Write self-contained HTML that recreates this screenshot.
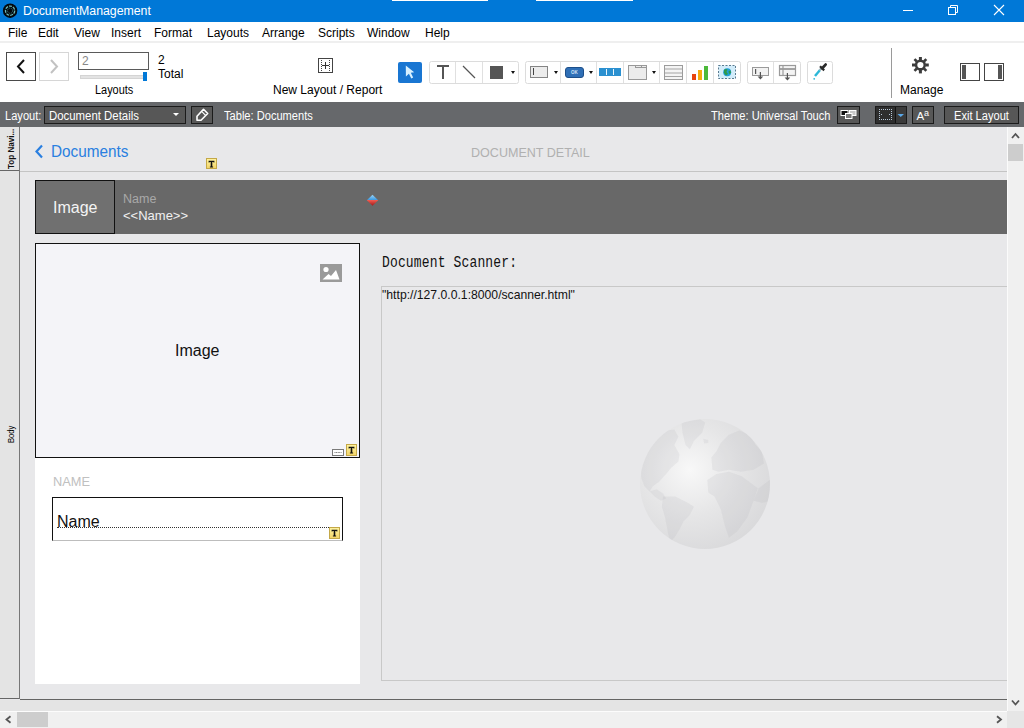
<!DOCTYPE html>
<html><head><meta charset="utf-8">
<style>
*{margin:0;padding:0;box-sizing:border-box}
html,body{width:1024px;height:728px;overflow:hidden;background:#e8e8ea;font-family:"Liberation Sans",sans-serif}
.a{position:absolute}
.t{position:absolute;white-space:nowrap;line-height:1}
#title{left:0;top:0;width:1024px;height:22px;background:#0078d7}
#menu{left:0;top:22px;width:1024px;height:19px;background:#fff}
#tb{left:0;top:41px;width:1024px;height:61px;background:#fff;border-top:2px solid #efefef}
#lb{left:0;top:102px;width:1024px;height:25px;background:#66686b}
.menu{font-size:12px;color:#000;top:27px}
.lb{font-size:12px;color:#fff;top:110px;transform-origin:0 0;transform:scaleX(0.925)}
.lbtn{background:#575757;border:1px solid #1b1b1b}
.grp{border:1px solid #dcdcdc;border-radius:2.5px;background:#fff}
.div{width:1px;background:#e0e0e0}
.dd{width:0;height:0;border-left:2.6px solid transparent;border-right:2.6px solid transparent;border-top:3px solid #111}
</style></head><body>
<svg width="0" height="0" style="position:absolute"><defs><linearGradient id="bgy" x1="0" y1="0" x2="0" y2="1"><stop offset="0" stop-color="#fff4a0"/><stop offset="1" stop-color="#f2d468"/></linearGradient></defs></svg>
<!-- title bar -->
<div id="title" class="a"></div>
<div class="a" style="left:392px;top:0;width:96px;height:1px;background:#fff"></div>
<div class="a" style="left:536px;top:0;width:97px;height:1px;background:#fff"></div>
<svg class="a" style="left:0;top:0" width="22" height="22"><circle cx="10.1" cy="10.7" r="7.2" fill="#03080c"/><circle cx="10.1" cy="10.7" r="4.6" fill="none" stroke="#6cb8b8" stroke-width="1.3" stroke-dasharray="3 1"/><circle cx="10.1" cy="10.7" r="2.6" fill="none" stroke="#3c7c80" stroke-width="0.9" stroke-dasharray="1.2 0.9"/></svg>
<div class="t" style="left:23px;top:5px;font-size:12.3px;color:#fff">DocumentManagement</div>
<svg class="a" style="left:890px;top:0" width="134" height="22"><path d="M13 10.5 H23" stroke="#fff" stroke-width="1"/><rect x="58.5" y="7.5" width="7" height="7" fill="none" stroke="#fff" stroke-width="1"/><path d="M60.5 7.5 V5.5 H67.5 V12.5 H65.5" fill="none" stroke="#fff" stroke-width="1"/><path d="M104 5 L114 15 M114 5 L104 15" stroke="#fff" stroke-width="1.1"/></svg>

<!-- menu -->
<div id="menu" class="a"></div>
<div class="t menu" style="left:8px">File</div>
<div class="t menu" style="left:38px">Edit</div>
<div class="t menu" style="left:74px">View</div>
<div class="t menu" style="left:111px">Insert</div>
<div class="t menu" style="left:154px">Format</div>
<div class="t menu" style="left:207px">Layouts</div>
<div class="t menu" style="left:262px">Arrange</div>
<div class="t menu" style="left:318px">Scripts</div>
<div class="t menu" style="left:367px">Window</div>
<div class="t menu" style="left:425px">Help</div>

<!-- toolbar -->
<div id="tb" class="a"></div>
<div class="a" style="left:6px;top:52px;width:30px;height:29px;border:1px solid #4a4a4a"></div>
<svg class="a" style="left:6px;top:52px" width="30" height="29"><path d="M18 8 L12 14.5 L18 21" fill="none" stroke="#111" stroke-width="2"/></svg>
<div class="a" style="left:39px;top:52px;width:30px;height:29px;border:1px solid #d6d6d6"></div>
<svg class="a" style="left:39px;top:52px" width="30" height="29"><path d="M12 8 L18 14.5 L12 21" fill="none" stroke="#c2c2c2" stroke-width="2"/></svg>
<div class="a" style="left:78px;top:52px;width:71px;height:18px;border:1px solid #5a5a5a"></div>
<div class="t" style="left:82px;top:55px;font-size:12px;color:#888">2</div>
<div class="a" style="left:80px;top:75px;width:66px;height:4px;background:#e3e3e3;border:1px solid #d4d4d4"></div>
<div class="a" style="left:143px;top:72px;width:4px;height:9px;background:#0078d7"></div>
<div class="t" style="left:158px;top:53.5px;font-size:12px;color:#000">2</div>
<div class="t" style="left:158px;top:68px;font-size:12px;color:#000">Total</div>
<div class="t" style="left:94.5px;top:84px;font-size:12px;color:#000;transform-origin:0 0;transform:scaleX(0.91)">Layouts</div>
<!-- new layout -->
<svg class="a" style="left:318px;top:58px" width="15" height="15"><rect x="0.5" y="0.5" width="14" height="14" fill="none" stroke="#444" stroke-width="1"/><path d="M3.5 2 V13 M11.5 2 V13" stroke="#444" stroke-width="1" stroke-dasharray="1 1"/><path d="M7.5 4 V11 M4 7.5 H11" stroke="#333" stroke-width="1"/></svg>
<div class="t" style="left:273px;top:84px;font-size:12px;color:#000">New Layout / Report</div>
<!-- select tool -->
<div class="a" style="left:398px;top:62px;width:24px;height:21px;background:#1976d2;border-radius:2px"></div>
<svg class="a" style="left:398px;top:62px" width="24" height="21"><path d="M7.8 3.6 L16.2 10.2 L12.8 10.7 L15.2 15.6 L13.3 16.6 L10.9 11.7 L7.9 14.4 Z" fill="#d8f0ff"/></svg>
<!-- group 1 -->
<div class="a grp" style="left:429px;top:61px;width:90px;height:23px"></div>
<div class="a div" style="left:455px;top:62px;height:21px"></div>
<div class="a div" style="left:482px;top:62px;height:21px"></div>
<div class="a" style="left:437px;top:65px;width:12px;height:2px;background:#555"></div>
<div class="a" style="left:442px;top:65px;width:2px;height:14px;background:#555"></div>
<svg class="a" style="left:460px;top:63px" width="18" height="18"><path d="M3 3 L15 15" stroke="#555" stroke-width="1.3"/></svg>
<div class="a" style="left:490px;top:66px;width:13px;height:13px;background:#555"></div>
<div class="a dd" style="left:511px;top:71px"></div>
<!-- group 2 -->
<div class="a grp" style="left:525px;top:61px;width:216px;height:23px"></div>
<div class="a div" style="left:560px;top:62px;height:21px"></div>
<div class="a div" style="left:596px;top:62px;height:21px"></div>
<div class="a div" style="left:623px;top:62px;height:21px"></div>
<div class="a div" style="left:659px;top:62px;height:21px"></div>
<div class="a div" style="left:686px;top:62px;height:21px"></div>
<div class="a div" style="left:713px;top:62px;height:21px"></div>
<div class="a" style="left:530px;top:66px;width:18px;height:12px;background:#ececec;border:1px solid #858585"></div>
<div class="a" style="left:533px;top:68px;width:1px;height:7px;background:#444"></div>
<div class="a dd" style="left:553.5px;top:71px"></div>
<div class="a" style="left:565px;top:67px;width:19px;height:11px;background:#2f6fb6;border-radius:3px;border:1px solid #1d4f8a"></div>
<div class="t" style="left:571px;top:71px;font-size:4.5px;color:#cfe3f7;font-weight:bold">OK</div>
<div class="a dd" style="left:589px;top:71px"></div>
<div class="a" style="left:599px;top:68px;width:22px;height:8px;background:#2b90d0"></div>
<div class="a" style="left:606px;top:69px;width:1px;height:6px;background:#e8f4fc"></div>
<div class="a" style="left:613px;top:69px;width:1px;height:6px;background:#e8f4fc"></div>
<div class="a" style="left:628px;top:65px;width:19px;height:15px;background:#ececec;border:1px solid #999"></div>
<div class="a" style="left:635px;top:65px;width:12px;height:3px;border:1px solid #999;border-right:0"></div>
<div class="a" style="left:641px;top:65px;width:1px;height:3px;background:#999"></div>
<div class="a dd" style="left:652px;top:71px"></div>
<svg class="a" style="left:664px;top:65px" width="19" height="15"><rect x="0.5" y="0.5" width="18" height="14" fill="#f4f4f4" stroke="#9c9c9c" stroke-width="1"/><path d="M1 4 H18 M1 8 H18 M1 11.5 H18" stroke="#a4a4a4" stroke-width="1"/></svg>
<div class="a" style="left:692px;top:74px;width:4px;height:6px;background:#e8450f"></div>
<div class="a" style="left:698px;top:70px;width:4px;height:10px;background:#f5ac0c"></div>
<div class="a" style="left:704px;top:66px;width:4px;height:14px;background:#4cb93a"></div>
<svg class="a" style="left:718px;top:65px" width="18" height="14"><rect x="0.5" y="0.5" width="17" height="13" fill="#d2ecfa" stroke="#5a7a90" stroke-width="1" stroke-dasharray="2 1.5"/><circle cx="9.2" cy="7.2" r="4" fill="#1f9fd8"/><path d="M6 5 Q8 3.5 9.5 4.5 L8.5 7 L10 9 L8 10.5 L6 8Z M10.5 6 L12.5 5.5 L13 8 L11 9Z" fill="#2e9a4a"/></svg>
<!-- group 3 -->
<div class="a grp" style="left:747px;top:61px;width:54px;height:23px"></div>
<div class="a div" style="left:773px;top:62px;height:21px"></div>
<svg class="a" style="left:747px;top:61px" width="54" height="23"><rect x="5.5" y="6.5" width="16" height="8" fill="#f2f2f2" stroke="#9a9a9a" stroke-width="1"/><rect x="8" y="8" width="1.2" height="5" fill="#555"/><path d="M13.4 11 V17" stroke="#555" stroke-width="1.2"/><path d="M10.6 15.5 L16.2 15.5 L13.4 18.6Z" fill="#555"/><rect x="32.5" y="4.5" width="16" height="10" fill="#f4f4f4" stroke="#9a9a9a" stroke-width="1.2"/><path d="M33 8 H48" stroke="#9a9a9a" stroke-width="1.8"/><path d="M36 5 V14" stroke="#9a9a9a" stroke-width="1.2"/><path d="M40.4 12 V18" stroke="#555" stroke-width="1.2"/><path d="M37.6 16.5 L43.2 16.5 L40.4 19.6Z" fill="#555"/></svg>
<div class="a grp" style="left:807px;top:61px;width:26px;height:23px"></div>
<svg class="a" style="left:807px;top:61px" width="26" height="23"><path d="M8 15 L12.8 9.2" stroke="#2cb8d8" stroke-width="2.4"/><path d="M12.6 9.4 L14.6 7" stroke="#9ab0b8" stroke-width="2.2"/><path d="M13 5.2 L17.2 9.4" stroke="#2a2a2a" stroke-width="2.2"/><path d="M15.2 7.2 L18.6 3.6" stroke="#2a2a2a" stroke-width="2.8" stroke-linecap="round"/><circle cx="7.2" cy="17.8" r="0.9" fill="#2cb8d8"/></svg>
<!-- separator & manage -->
<div class="a" style="left:891px;top:48px;width:1px;height:50px;background:#9a9a9a"></div>
<svg class="a" style="left:911px;top:57px" width="19" height="17"><path d="M14.40 8.00 L17.80 8.00" stroke="#3c3c3c" stroke-width="3"/><path d="M12.94 11.54 L15.34 13.94" stroke="#3c3c3c" stroke-width="2.6"/><path d="M9.40 13.00 L9.40 16.40" stroke="#3c3c3c" stroke-width="3"/><path d="M5.86 11.54 L3.46 13.94" stroke="#3c3c3c" stroke-width="2.6"/><path d="M4.40 8.00 L1.00 8.00" stroke="#3c3c3c" stroke-width="3"/><path d="M5.86 4.46 L3.46 2.06" stroke="#3c3c3c" stroke-width="2.6"/><path d="M9.40 3.00 L9.40 -0.40" stroke="#3c3c3c" stroke-width="3"/><path d="M12.94 4.46 L15.34 2.06" stroke="#3c3c3c" stroke-width="2.6"/><circle cx="9.4" cy="8.0" r="4.35" fill="none" stroke="#3c3c3c" stroke-width="2.5"/></svg>
<div class="t" style="left:900px;top:84px;font-size:12px;color:#000">Manage</div>
<div class="a" style="left:960px;top:63px;width:20px;height:18px;border:1px solid #444"></div>
<div class="a" style="left:962px;top:65px;width:4px;height:14px;background:#555"></div>
<div class="a" style="left:984px;top:63px;width:20px;height:18px;border:1px solid #444"></div>
<div class="a" style="left:998px;top:65px;width:4px;height:14px;background:#555"></div>

<!-- layout bar -->
<div id="lb" class="a"></div>
<div class="t lb" style="left:5px">Layout:</div>
<div class="a lbtn" style="left:44px;top:106px;width:142px;height:18px"></div>
<div class="t lb" style="left:48.5px;transform:scaleX(0.95)">Document Details</div>
<div class="a dd" style="left:173px;top:113px;border-top-color:#fff;border-left-width:3.5px;border-right-width:3.5px;border-top-width:3px"></div>
<div class="a lbtn" style="left:191px;top:106px;width:22px;height:18px"></div>
<svg class="a" style="left:191px;top:106px" width="22" height="17"><path d="M12.5 3.3 L16.7 7.5 L10 14.2 L6 14.2 L6 10.2 Z" fill="none" stroke="#fff" stroke-width="1.6" stroke-linejoin="round"/><path d="M10.6 5.4 L14.8 9.6" stroke="#fff" stroke-width="1.2"/></svg>
<div class="t lb" style="left:224px">Table: Documents</div>
<div class="t lb" style="left:711px">Theme: Universal Touch</div>
<div class="a lbtn" style="left:837px;top:106px;width:23px;height:18px"></div>
<svg class="a" style="left:837px;top:106px" width="23" height="17"><rect x="4" y="4.5" width="7" height="5" fill="#111" stroke="#fff" stroke-width="1"/><rect x="12.5" y="4.5" width="6.5" height="5" fill="#c8c8c8" stroke="#fff" stroke-width="1"/><rect x="8.5" y="7.5" width="6.5" height="5" fill="#7a7a7a" stroke="#fff" stroke-width="1"/></svg>
<div class="a lbtn" style="left:875px;top:106px;width:32px;height:18px;background:#2e2e2e"></div>
<div class="a" style="left:895px;top:107px;width:1px;height:16px;background:#111"></div>
<div class="a" style="left:896px;top:107px;width:10px;height:16px;background:#3a3a3a"></div>
<svg class="a" style="left:875px;top:106px" width="32" height="17"><g fill="#b8c8d8"><rect x="4" y="3" width="1" height="1"/><rect x="6" y="3" width="1" height="1"/><rect x="8" y="3" width="1" height="1"/><rect x="10" y="3" width="1" height="1"/><rect x="12" y="3" width="1" height="1"/><rect x="14" y="3" width="1" height="1"/><rect x="16" y="3" width="1" height="1"/><rect x="4" y="13" width="1" height="1"/><rect x="6" y="13" width="1" height="1"/><rect x="8" y="13" width="1" height="1"/><rect x="10" y="13" width="1" height="1"/><rect x="12" y="13" width="1" height="1"/><rect x="14" y="13" width="1" height="1"/><rect x="16" y="13" width="1" height="1"/><rect x="4" y="5" width="1" height="1"/><rect x="4" y="7" width="1" height="1"/><rect x="4" y="9" width="1" height="1"/><rect x="4" y="11" width="1" height="1"/><rect x="16" y="5" width="1" height="1"/><rect x="16" y="7" width="1" height="1"/><rect x="16" y="9" width="1" height="1"/><rect x="16" y="11" width="1" height="1"/><rect x="6" y="8" width="1" height="1"/><rect x="14" y="8" width="1" height="1"/></g><path d="M22.5 8 L29 8 L25.75 11Z" fill="#5aa8e8"/></svg>
<div class="a lbtn" style="left:912px;top:106px;width:22px;height:18px"></div>
<div class="t" style="left:916.5px;top:110.5px;font-size:11.5px;color:#fff">A</div>
<div class="t" style="left:924px;top:108.5px;font-size:9px;color:#fff">a</div>
<div class="a lbtn" style="left:944px;top:106px;width:75px;height:18px"></div>
<div class="t lb" style="left:954px">Exit Layout</div>

<!-- left part labels -->
<div class="a" style="left:0;top:127px;width:19px;height:571px;background:#e4e4e4"></div>
<div class="a" style="left:19px;top:127px;width:1px;height:572px;background:#777"></div>
<div class="a" style="left:0;top:170px;width:19px;height:1px;background:#666"></div>
<div class="a" style="left:0;top:698px;width:19px;height:1px;background:#666"></div>

<!-- left labels text -->
<div class="t" style="left:6px;top:168.5px;font-size:9.5px;font-weight:bold;color:#111;transform-origin:0 0;transform:rotate(-90deg) scaleX(0.85)">Top Navi...</div>
<div class="t" style="left:6.5px;top:443px;font-size:9px;color:#000;transform-origin:0 0;transform:rotate(-90deg) scaleX(0.85)">Body</div>

<!-- content area -->
<svg class="a" style="left:33px;top:143px" width="12" height="17"><path d="M9 2.5 L3.5 8.5 L9 14.5" fill="none" stroke="#2a7fe0" stroke-width="2.2"/></svg>
<div class="t" style="left:50.5px;top:143px;font-size:17px;color:#2a7fe0;transform-origin:0 0;transform:scaleX(0.9)">Documents</div>
<div class="t" style="left:471px;top:145.5px;font-size:13px;color:#b0b0b0;transform-origin:0 0;transform:scaleX(0.965)">DOCUMENT DETAIL</div>
<svg class="a" style="left:206px;top:158px" width="11" height="11"><defs></defs><rect x="0.5" y="0.5" width="10" height="10" fill="url(#bgy)" stroke="#c4a848" stroke-width="1"/><path d="M2.6 2.8 H8.4 V4.6 H7.6 L7.2 3.9 H6.3 V8.6 H7.1 V9.4 H3.9 V8.6 H4.7 V3.9 H3.8 L3.4 4.6 H2.6Z" fill="#111"/></svg>

<!-- header bar -->
<div class="a" style="left:35px;top:180px;width:972px;height:54px;background:#686868"></div>
<div class="a" style="left:35px;top:180px;width:80px;height:54px;background:#707070;border:1px solid #111"></div>
<div class="t" style="left:53px;top:200px;font-size:16px;color:#f4f4f4">Image</div>
<div class="t" style="left:123px;top:192.5px;font-size:12.5px;color:#a8a8a8">Name</div>
<div class="t" style="left:123px;top:209px;font-size:13px;color:#f0f0f0">&lt;&lt;Name&gt;&gt;</div>
<svg class="a" style="left:366px;top:194px" width="13" height="13"><defs><linearGradient id="dg" x1="0" y1="0" x2="0" y2="1"><stop offset="0" stop-color="#9ad4f8"/><stop offset="0.48" stop-color="#3a98e0"/><stop offset="0.5" stop-color="#f05a50"/><stop offset="1" stop-color="#a01818"/></linearGradient></defs><path d="M6.5 0.8 L12.2 6.3 L6.5 11.8 L0.8 6.3 Z" fill="url(#dg)"/></svg>

<!-- image container -->
<div class="a" style="left:35px;top:243px;width:325px;height:441px;background:#fff"></div>
<div class="a" style="left:35px;top:243px;width:325px;height:215px;background:#f4f4f8;border:1px solid #111"></div>
<div class="t" style="left:175px;top:343px;font-size:16px;color:#111">Image</div>
<svg class="a" style="left:320px;top:264px" width="22" height="18"><rect width="22" height="18" fill="#9a9a9a"/><circle cx="6" cy="5.5" r="2.6" fill="#fff"/><path d="M2.5 15.5 L8.5 10 L11 12 L16 6 L19.5 15.5 Z" fill="#fff"/></svg>
<svg class="a" style="left:332px;top:449px" width="12" height="7"><rect x="0.5" y="0.5" width="11" height="6" fill="#fff" stroke="#7a7a7a" stroke-width="1"/><path d="M2.5 3.5 H9.5" stroke="#777" stroke-width="1" stroke-dasharray="1 0.6"/></svg>
<svg class="a" style="left:346px;top:444px" width="11" height="12"><defs></defs><rect x="0.5" y="0.5" width="10" height="11" fill="url(#bgy)" stroke="#c4a848" stroke-width="1"/><path d="M2.6 2.8 H8.4 V4.6 H7.6 L7.2 3.9 H6.3 V8.6 H7.1 V9.4 H3.9 V8.6 H4.7 V3.9 H3.8 L3.4 4.6 H2.6Z" fill="#111"/></svg>
<div class="t" style="left:53px;top:475.5px;font-size:12.8px;color:#c0c0c0">NAME</div>
<div class="a" style="left:52px;top:497px;width:291px;height:44px;border:1px solid #111;border-bottom-color:#bdbdbd"></div>
<div class="t" style="left:57px;top:514px;font-size:16px;color:#111">Name</div>
<div class="a" style="left:57px;top:527px;width:272px;height:1px;border-top:1px dotted #333"></div>
<svg class="a" style="left:329px;top:527px" width="11" height="12"><defs></defs><rect x="0.5" y="0.5" width="10" height="11" fill="url(#bgy)" stroke="#c4a848" stroke-width="1"/><path d="M2.6 2.8 H8.4 V4.6 H7.6 L7.2 3.9 H6.3 V8.6 H7.1 V9.4 H3.9 V8.6 H4.7 V3.9 H3.8 L3.4 4.6 H2.6Z" fill="#111"/></svg>

<!-- web viewer -->
<div class="t" style="left:382px;top:255px;font-size:13px;letter-spacing:0.15px;font-family:'Liberation Mono',monospace;color:#111;transform-origin:0 0;transform:scaleY(1.2)">Document Scanner:</div>
<div class="a" style="left:381px;top:286px;width:640px;height:395px;border:1px solid #c8c8c8;border-right:0"></div>
<div class="t" style="left:382px;top:289px;font-size:12.2px;color:#111">"http://127.0.0.1:8000/scanner.html"</div>
<svg class="a" style="left:640px;top:419px" width="130" height="130" viewBox="0 0 130 130"><defs><radialGradient id="gg" cx="0.385" cy="0.39" r="0.7"><stop offset="0" stop-color="#f8f8f8"/><stop offset="0.5" stop-color="#e6e6e7"/><stop offset="1" stop-color="#d8d8da"/></radialGradient><clipPath id="gc"><circle cx="65" cy="65" r="65"/></clipPath></defs><circle cx="65" cy="65" r="65" fill="url(#gg)"/><g clip-path="url(#gc)" fill="#b4b4b8" fill-opacity="0.17"><path d="M41.5 3.4 L60.1 0.3 L65.2 3.4 L62.1 13.7 L53.9 21.9 L49.8 30.2 L45.6 26.0 L42.5 13.7Z"/><path d="M63.2 19.8 L68.3 20.9 L68.3 24.0 L64.2 24.4Z"/><path d="M27.1 11.6 L34.3 10.6 L38.4 17.8 L34.3 26.0 L39.5 35.3 L38.4 42.5 L31.2 48.7 L26.1 54.9 L18.8 63.1 L12.7 67.2 L9.6 72.4 L4.4 67.2 L1.3 59.0 L0.7 48.7 L5.5 34.3 L14.7 21.9 L23.0 13.7Z"/><path d="M9.6 72.4 L16.8 70.3 L23.0 74.5 L26.1 79.6 L20.9 81.7 L14.7 77.5Z"/><path d="M23.0 77.5 L35.3 77.5 L47.7 83.7 L53.9 87.8 L49.8 96.1 L43.6 102.3 L39.5 110.5 L34.3 118.8 L30.2 122.9 L28.1 114.6 L25.0 98.2 L21.9 87.8Z"/><path d="M71.4 38.4 L76.5 32.2 L80.7 24.0 L88.9 15.7 L99.2 11.6 L109.5 15.7 L115.7 26.0 L121.9 32.2 L123.9 44.6 L113.6 50.8 L101.3 52.8 L88.9 50.8 L78.6 52.8 L72.4 50.8Z"/><path d="M67.3 61.1 L76.5 54.9 L88.9 52.8 L101.3 56.9 L109.5 63.1 L117.8 69.3 L113.6 81.7 L107.5 98.2 L97.2 112.6 L88.9 118.8 L84.8 106.4 L80.7 89.9 L74.5 77.5 L68.3 73.4Z"/><path d="M113.6 81.7 L118.8 69.3 L132.2 59.0 L132.2 81.7 L121.9 83.7 Z"/></g></svg>
<div class="a" style="left:20px;top:171px;width:987px;height:1px;background:#c4c4c4"></div>
<div class="a" style="left:20px;top:699px;width:987px;height:1px;background:#646464"></div>
<div class="a" style="left:0;top:700px;width:1007px;height:11px;background:#e4e4e4"></div>

<!-- scrollbars -->
<div class="a" style="left:1007px;top:127px;width:17px;height:584px;background:#f0f0f0;border-left:1px solid #fbfbfb"></div>
<div class="a" style="left:0;top:711px;width:1007px;height:17px;background:#f0f0f0"></div>
<div class="a" style="left:1007px;top:711px;width:17px;height:17px;background:#e6e6e6"></div>
<div class="a" style="left:1008px;top:144px;width:15px;height:17px;background:#cdcdcd"></div>
<div class="a" style="left:17px;top:712px;width:31px;height:15px;background:#cdcdcd"></div>
<div class="a" style="left:0;top:711px;width:1007px;height:1px;background:#fcfcfc"></div>
<svg class="a" style="left:0;top:711px" width="17" height="17"><path d="M10.5 5.2 L6.5 8.5 L10.5 11.8" fill="none" stroke="#555" stroke-width="1.8"/></svg>
<svg class="a" style="left:990px;top:711px" width="17" height="17"><path d="M7 5.2 L11 8.5 L7 11.8" fill="none" stroke="#555" stroke-width="1.8"/></svg>
<svg class="a" style="left:1007px;top:127px" width="17" height="17"><path d="M5 11 L8.5 7 L12 11" fill="none" stroke="#555" stroke-width="1.8"/></svg>
<svg class="a" style="left:1007px;top:694px" width="17" height="17"><path d="M5 6.5 L8.5 10.5 L12 6.5" fill="none" stroke="#555" stroke-width="1.8"/></svg>
</body></html>
